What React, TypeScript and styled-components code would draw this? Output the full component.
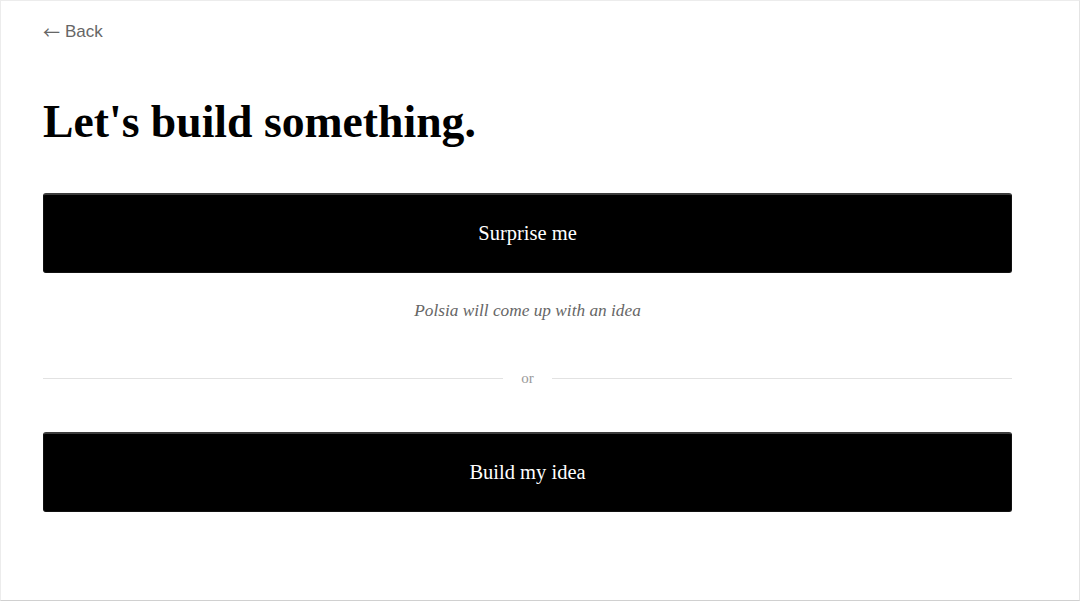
import React from "react";
import styled, { createGlobalStyle } from "styled-components";

const Global = createGlobalStyle`
  html, body { margin: 0; padding: 0; background: #fff; }
  * { box-sizing: border-box; }
`;

const Frame = styled.div`
  width: 1080px;
  height: 601px;
  border: 1px solid #ececec;
  border-bottom-color: #d0d0d0;
  border-right-color: #e4e4e4;
  padding: 21px 0 0 42px;
  font-family: "Liberation Serif", "Times New Roman", serif;
`;

const Content = styled.div`
  width: 969px;
  display: flex;
  flex-direction: column;
`;

const BackLink = styled.a`
  align-self: flex-start;
  display: flex;
  align-items: center;
  gap: 5px;
  font-family: "Liberation Sans", Arial, sans-serif;
  font-size: 17px;
  line-height: 20px;
  color: #666;
  text-decoration: none;
  cursor: pointer;
`;

const Arrow = styled.span`
  font-family: "Noto Sans CJK JP", sans-serif;
  font-size: 17px;
  line-height: 20px;
`;

const Title = styled.h1`
  margin: 54px 0 0;
  font-size: 45.7px;
  line-height: 52px;
  font-weight: 700;
  color: #000;
`;

const ActionButton = styled.button<{ $top: number }>`
  margin-top: ${(p) => p.$top}px;
  height: 80px;
  width: 100%;
  background: #000;
  color: #fff;
  border: 1px solid #111;
  border-top: 2px solid #3c3c3c;
  border-radius: 3px;
  font-family: "Liberation Serif", "Times New Roman", serif;
  font-size: 20.5px;
  cursor: pointer;
`;

const Caption = styled.p`
  margin: 28px 0 0;
  text-align: center;
  font-style: italic;
  font-size: 17.3px;
  line-height: 20px;
  color: #666;
`;

const Divider = styled.div`
  margin-top: 47px;
  display: flex;
  align-items: center;
  gap: 18px;
  height: 20px;
`;

const Rule = styled.div`
  flex: 1;
  height: 1px;
  background: #e2e2e2;
`;

const Or = styled.span`
  font-size: 15px;
  color: #999;
  line-height: 20px;
`;

export default function App() {
  return (
    <>
      <Global />
      <Frame>
        <Content>
          <BackLink>
            <Arrow>←</Arrow>
            <span>Back</span>
          </BackLink>
          <Title>Let's build something.</Title>
          <ActionButton $top={45}>Surprise me</ActionButton>
          <Caption>Polsia will come up with an idea</Caption>
          <Divider>
            <Rule />
            <Or>or</Or>
            <Rule />
          </Divider>
          <ActionButton $top={44}>Build my idea</ActionButton>
        </Content>
      </Frame>
    </>
  );
}
